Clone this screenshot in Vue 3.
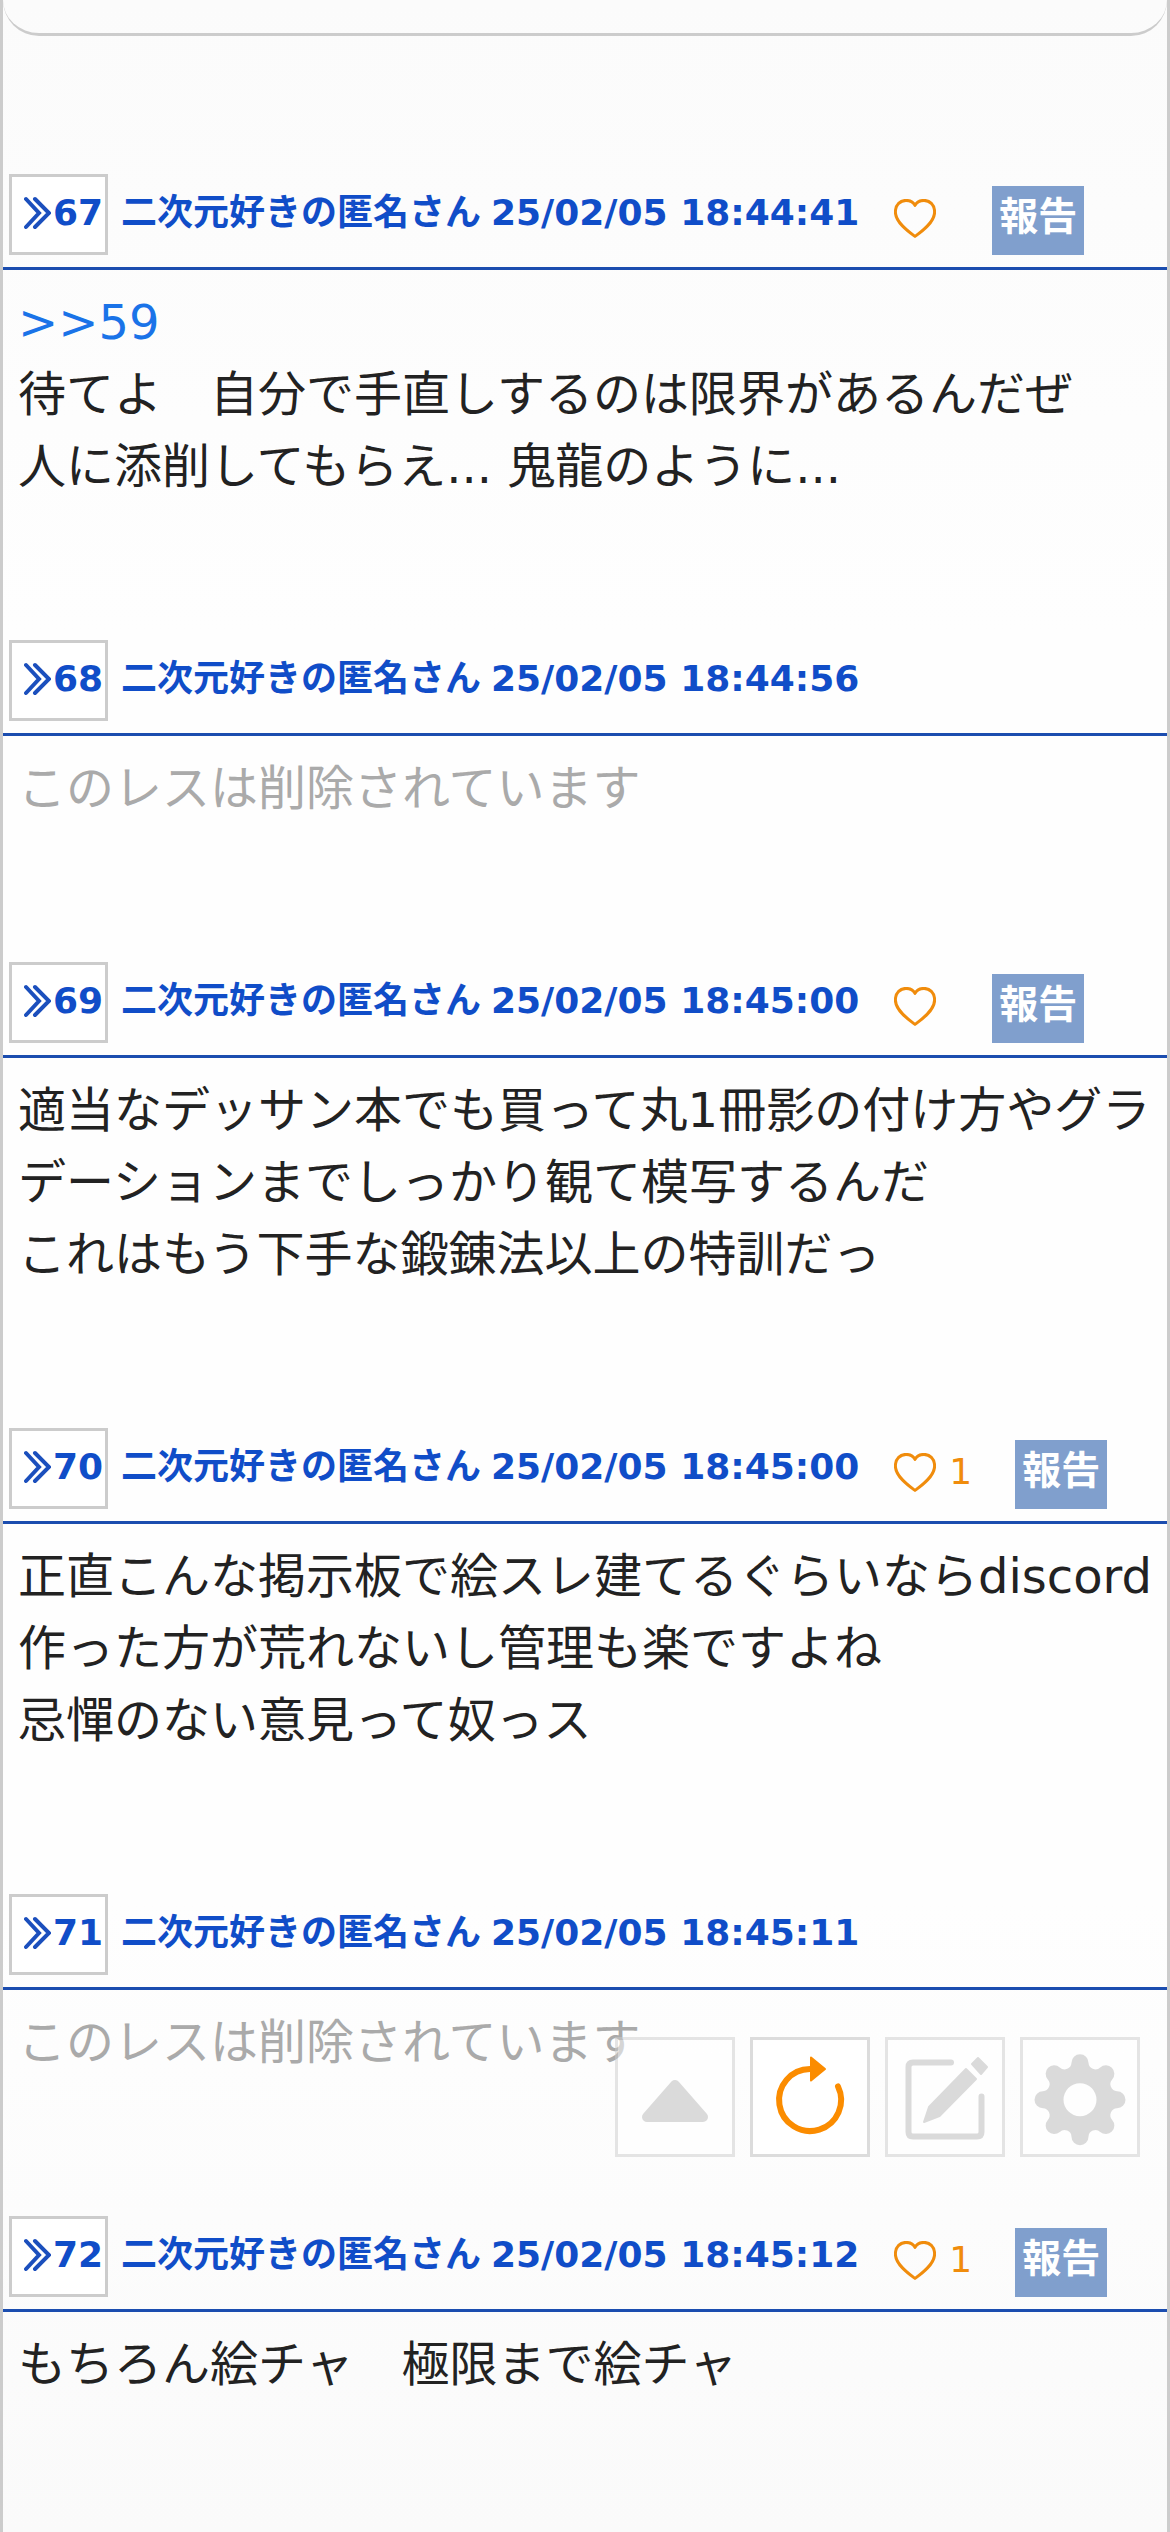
<template>
  <div class="thread">
    <div class="thread__prev"></div>

    <main class="posts">
      <article v-for="post in posts" :key="post.no" class="post">
        <header class="post__header">
          <button type="button" class="post__no">
            <svg class="post__quote" viewBox="0 0 27 32" aria-hidden="true">
              <path d="M2 2L15 16L2 30M11 2L25 16L11 30" />
            </svg>
            <span>{{ post.no }}</span>
          </button>

          <div class="post__meta">
            <span>{{ userName }}</span>
            <time>{{ post.date }}</time>
          </div>

          <template v-if="!post.deleted">
            <button type="button" class="post__like" aria-label="いいね">
              <svg class="post__heart" viewBox="0 0 42 39" aria-hidden="true">
                <path
                  d="M21 37.4C15 33 1.4 23.5 1.4 13C1.4 5.500 6.500 1.400 12 1.400C16.500 1.400 19.500 3.500 21 6.400C22.500 3.500 25.500 1.400 30 1.400C35.500 1.400 40.600 5.500 40.600 13C40.600 23.500 27 33 21 37.400Z"
                />
              </svg>
              <span>{{ post.likes || "" }}</span>
            </button>
            <button type="button" class="post__report">報告</button>
          </template>
        </header>

        <div v-if="post.deleted" class="post__body post__body--deleted">このレスは削除されています</div>
        <div v-else class="post__body">
          <a v-if="post.reply" href="#" class="post__reply">&gt;&gt;{{ post.reply }}</a>
          <p v-for="line in post.lines" :key="line" class="post__line">{{ line }}</p>
        </div>
      </article>
    </main>

    <nav class="tools">
      <button type="button" class="tools__btn tools__btn--off" aria-label="上へ">
        <svg viewBox="3 3 114 114" aria-hidden="true">
          <path class="solid round" d="M60 48L32 80H88Z" />
        </svg>
      </button>
      <button type="button" class="tools__btn" aria-label="更新">
        <svg viewBox="3 3 114 114" aria-hidden="true">
          <path class="line" d="M88 49.500A31 31 0 1 1 60 32" />
          <path class="solid" d="M61 20.500L75 32L61 43.500Z" />
        </svg>
      </button>
      <button type="button" class="tools__btn tools__btn--off" aria-label="書き込む">
        <svg viewBox="3 3 114 114" aria-hidden="true">
          <path class="line" d="M66 25.500H28Q23.500 25.500 23.500 30V95Q23.500 99.500 28 99.500H92Q96.500 99.500 96.500 95V59.500" />
          <path class="solid" d="M81 32L91 42L54.500 79L39 85L44 70Z" />
          <path class="solid" d="M87 27L93 21L102 30L96 37Z" />
        </svg>
      </button>
      <button type="button" class="tools__btn tools__btn--off" aria-label="設定">
        <svg viewBox="-57 -59.700 114 114" aria-hidden="true">
          <path
            class="gear"
            d="M37 -8.500A8.500 8.500 0 0 1 37 8.500A7 7 0 0 0 32.200 20.200A8.500 8.500 0 0 1 20.200 32.200A7 7 0 0 0 8.500 37A8.500 8.500 0 0 1 -8.500 37A7 7 0 0 0 -20.200 32.200A8.500 8.500 0 0 1 -32.200 20.200A7 7 0 0 0 -37 8.500A8.500 8.500 0 0 1 -37 -8.500A7 7 0 0 0 -32.200 -20.200A8.500 8.500 0 0 1 -20.200 -32.200A7 7 0 0 0 -8.500 -37A8.500 8.500 0 0 1 8.500 -37A7 7 0 0 0 20.200 -32.200A8.500 8.500 0 0 1 32.200 -20.200A7 7 0 0 0 37 -8.500ZM16.500 0A16.500 16.500 0 1 0 -16.500 0A16.500 16.500 0 1 0 16.500 0Z"
          />
        </svg>
      </button>
    </nav>
  </div>
</template>

<script setup>
import { ref } from "vue"

const userName = "二次元好きの匿名さん"

const posts = ref([
  {
    no: 67,
    date: "25/02/05 18:44:41",
    likes: 0,
    reply: 59,
    lines: ["待てよ　自分で手直しするのは限界があるんだぜ", "人に添削してもらえ... 鬼龍のように..."],
  },
  { no: 68, date: "25/02/05 18:44:56", deleted: true },
  {
    no: 69,
    date: "25/02/05 18:45:00",
    likes: 0,
    lines: [
      "適当なデッサン本でも買って丸1冊影の付け方やグラデーションまでしっかり観て模写するんだ",
      "これはもう下手な鍛錬法以上の特訓だっ",
    ],
  },
  {
    no: 70,
    date: "25/02/05 18:45:00",
    likes: 1,
    lines: [
      "正直こんな掲示板で絵スレ建てるぐらいならdiscord作った方が荒れないし管理も楽ですよね",
      "忌憚のない意見って奴っス",
    ],
  },
  { no: 71, date: "25/02/05 18:45:11", deleted: true },
  {
    no: 72,
    date: "25/02/05 18:45:12",
    likes: 1,
    lines: ["もちろん絵チャ　極限まで絵チャ"],
  },
])
</script>

<style>
body {
  background: #fcfcfc;
}
</style>

<style scoped>
.thread {
  box-sizing: border-box;
  min-height: 100vh;
  border: solid #ccc;
  border-width: 0 3px;
  background: linear-gradient(#fbfbfb, #fefefe 25%, #fefefe 75%, #fafafa);
  color: #222;
  font-family: "DejaVu Sans", "Noto Sans CJK JP", sans-serif;
}

button {
  margin: 0;
  padding: 0;
  border: 0;
  background: none;
  font-family: inherit;
  cursor: pointer;
}

/* 前のレスの下端 */
.thread__prev {
  height: 33px;
  border-bottom: 3px solid #ccc;
  border-radius: 0 0 45px 45px;
}

.posts {
  display: flex;
  flex-direction: column;
  gap: 138px;
  padding-top: 138px;
}

.post__header {
  display: flex;
  align-items: flex-start;
  padding: 0 6px 12px;
  border-bottom: 3px solid #1b4daf;
  color: #104dc8;
  font-size: 36px;
  font-weight: 700;
}

.post__no {
  display: flex;
  align-items: flex-start;
  gap: 2px;
  box-sizing: border-box;
  min-width: 99px;
  height: 81px;
  padding-left: 12px;
  border: 3px solid #ccc;
  background: #fff;
  color: inherit;
  font-size: 36px;
  font-weight: 700;
  line-height: 72px;
}

.post__quote {
  width: 27px;
  height: 72px;
  fill: none;
  stroke: #1b4fbd;
  stroke-width: 4;
  stroke-linecap: round;
}

.post__meta {
  display: flex;
  gap: 10px;
  margin-left: 13px;
  line-height: 78px;
  white-space: nowrap;
}

.post__like {
  display: flex;
  align-items: center;
  align-self: flex-end;
  gap: 13px;
  height: 74px;
  margin-left: 35px;
  color: #f08c0c;
  font-size: 36px;
  line-height: 74px;
}

.post__heart {
  width: 42px;
  height: 39px;
  fill: none;
  stroke: #f08c0c;
  stroke-width: 3;
  stroke-linejoin: round;
}

.post__report {
  align-self: flex-end;
  box-sizing: border-box;
  height: 69px;
  margin-left: 43px;
  padding: 0 7px 7px;
  background: #809fcd;
  color: #fff;
  font-size: 39px;
  font-weight: 700;
  line-height: 62px;
}

.post__body {
  padding: 16px 12px 0 15px;
  font-size: 48px;
  line-height: 72px;
}

.post__body--deleted {
  color: #aaa;
}

.post__reply {
  display: block;
  color: #1a73e8;
  text-decoration: none;
}

.post__line {
  margin: 0;
}

/* 画面右下の操作ボタン */
.tools {
  position: fixed;
  right: 30px;
  bottom: 375px;
  display: flex;
  gap: 15px;
}

.tools__btn {
  box-sizing: border-box;
  width: 120px;
  height: 120px;
  border: 3px solid #dcdcdc;
  background: #fff;
  color: #fb8c00;
}

.tools__btn--off {
  border-color: #ccc;
  color: #b8b8b8;
  opacity: 0.5;
}

.tools__btn svg {
  display: block;
  width: 100%;
}

.line {
  fill: none;
  stroke: currentColor;
  stroke-width: 6;
  stroke-linecap: round;
}

.solid {
  fill: currentColor;
  stroke: currentColor;
  stroke-width: 2;
  stroke-linejoin: round;
}

.round {
  stroke-width: 10;
}

.gear {
  fill: currentColor;
  fill-rule: evenodd;
}
</style>
